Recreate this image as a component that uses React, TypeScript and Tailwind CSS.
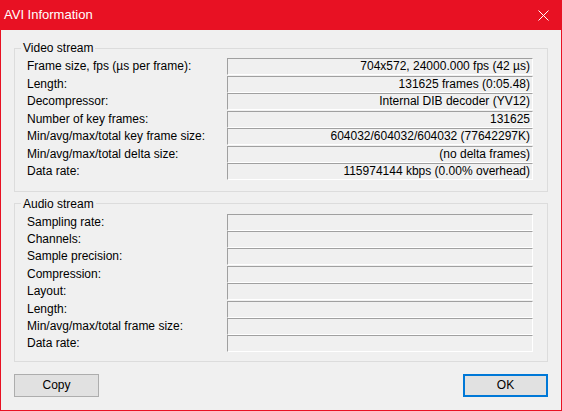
import React from "react";

const font = { fontFamily: '"Segoe UI", "Liberation Sans", Arial, sans-serif' };

const video: [string, string][] = [
  ["Frame size, fps (µs per frame):", "704x572, 24000.000 fps (42 µs)"],
  ["Length:", "131625 frames (0:05.48)"],
  ["Decompressor:", "Internal DIB decoder (YV12)"],
  ["Number of key frames:", "131625"],
  ["Min/avg/max/total key frame size:", "604032/604032/604032 (77642297K)"],
  ["Min/avg/max/total delta size:", "(no delta frames)"],
  ["Data rate:", "115974144 kbps (0.00% overhead)"],
];

const audio: [string, string][] = [
  ["Sampling rate:", ""],
  ["Channels:", ""],
  ["Sample precision:", ""],
  ["Compression:", ""],
  ["Layout:", ""],
  ["Length:", ""],
  ["Min/avg/max/total frame size:", ""],
  ["Data rate:", ""],
];

function Rows({ rows, rowH }: { rows: [string, string][]; rowH: string }) {
  return (
    <div className="flex flex-col">
      {rows.map(([l, v], i) => (
        <div key={i} className={`grid grid-cols-[200px_306px] ${rowH}`}>
          <div className="h-[17px] leading-[17px] text-[12px] text-black whitespace-nowrap">{l}</div>
          <div className="h-[17px] leading-[15px] text-[12px] text-black text-right pr-[2px] border-t border-l border-t-[#a0a0a0] border-l-[#a0a0a0] border-b border-r border-b-white border-r-white whitespace-nowrap">
            {v}
          </div>
        </div>
      ))}
    </div>
  );
}

export default function App() {
  return (
    <div className="w-[562px] h-[411px] flex flex-col bg-[#f0f0f0] select-none" style={font}>
      <div className="h-[30px] bg-[#e81123] flex items-center justify-between pl-[4px] pr-[13px] shrink-0">
        <span className="text-white text-[13px]">AVI Information</span>
        <svg width="11" height="11" viewBox="0 0 11 11">
          <path d="M0.5 0.5 L10.5 10.5 M10.5 0.5 L0.5 10.5" stroke="white" strokeWidth="1" />
        </svg>
      </div>
      <div className="flex-1 flex flex-col border-l border-r border-b border-[#e81123] px-[13px]">
        <fieldset className="mt-[11px] border border-[#dcdcdc] pl-[12px] pr-[14px] pt-[3px] pb-[10px]">
          <legend className="-ml-[6px] px-[2px] text-[12px] leading-[14px] text-black">Video stream</legend>
          <Rows rows={video} rowH="h-[17.5px]" />
        </fieldset>
        <fieldset className="mt-[5px] border border-[#dcdcdc] pl-[12px] pr-[14px] pt-[3px] pb-[8px]">
          <legend className="-ml-[6px] px-[2px] text-[12px] leading-[14px] text-black">Audio stream</legend>
          <Rows rows={audio} rowH="h-[17.43px]" />
        </fieldset>
        <div className="flex justify-between mt-[12px]">
          <button className="w-[85px] h-[23px] bg-[#e1e1e1] border border-[#adadad] text-[12px] text-black">
            Copy
          </button>
          <button className="w-[85px] h-[23px] bg-[#e1e1e1] border-2 border-[#0078d7] text-[12px] text-black">
            OK
          </button>
        </div>
      </div>
    </div>
  );
}
